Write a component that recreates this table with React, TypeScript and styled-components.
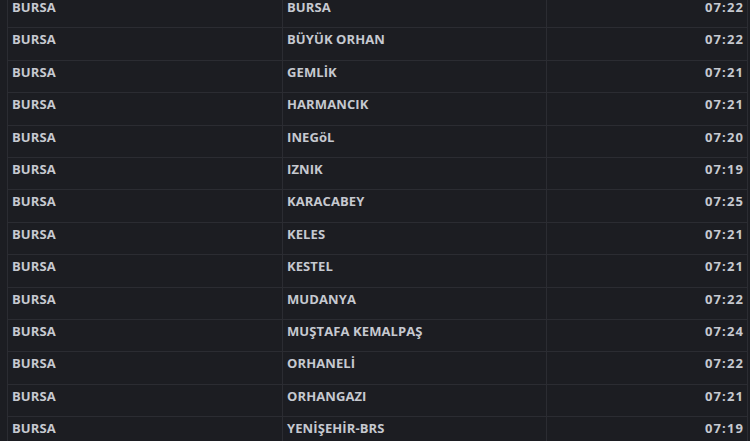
import React from 'react';
import styled, { createGlobalStyle } from 'styled-components';

const GlobalStyle = createGlobalStyle`
  html, body {
    margin: 0;
    padding: 0;
    background: #1c1d22;
    overflow: hidden;
  }
`;

const Page = styled.div`
  width: 750px;
  height: 441px;
  overflow: hidden;
  background: #1c1d22;
  padding-left: 7px;
  box-sizing: border-box;
`;

const Table = styled.div`
  width: 739px;
  margin-top: -4px;
  border-left: 1px solid #2b2c32;
  border-right: 1px solid #2b2c32;
`;

const Row = styled.div`
  display: grid;
  grid-template-columns: 275px 264px 1fr;
  height: 32.4px;
  box-sizing: border-box;
  border-bottom: 1px solid #2b2c32;
`;

const Cell = styled.div<{ $align?: 'left' | 'right'; $divider?: boolean }>`
  padding: 6px 4px 0 4px;
  font-family: 'Open Sans', 'Liberation Sans', sans-serif;
  font-weight: 700;
  font-size: 13px;
  line-height: 10px;
  letter-spacing: 0.1px;
  color: #c6c9d0;
  text-align: ${({ $align }) => $align || 'left'};
  border-right: ${({ $divider }) => ($divider ? '1px solid #2b2c32' : 'none')};
  white-space: nowrap;
`;

const Time = styled(Cell)`
  letter-spacing: 1.1px;
  padding-right: 3px;
`;

const rows: [string, string, string][] = [
  ['BURSA', 'BURSA', '07:22'],
  ['BURSA', 'BÜYÜK ORHAN', '07:22'],
  ['BURSA', 'GEMLİK', '07:21'],
  ['BURSA', 'HARMANCIK', '07:21'],
  ['BURSA', 'INEGöL', '07:20'],
  ['BURSA', 'IZNIK', '07:19'],
  ['BURSA', 'KARACABEY', '07:25'],
  ['BURSA', 'KELES', '07:21'],
  ['BURSA', 'KESTEL', '07:21'],
  ['BURSA', 'MUDANYA', '07:22'],
  ['BURSA', 'MUŞTAFA KEMALPAŞ', '07:24'],
  ['BURSA', 'ORHANELİ', '07:22'],
  ['BURSA', 'ORHANGAZI', '07:21'],
  ['BURSA', 'YENİŞEHİR-BRS', '07:19'],
];

export default function App() {
  return (
    <Page>
      <GlobalStyle />
      <Table>
        {rows.map(([city, district, time], i) => (
          <Row key={i}>
            <Cell $divider>{city}</Cell>
            <Cell $divider>{district}</Cell>
            <Time $align='right'>{time}</Time>
          </Row>
        ))}
      </Table>
    </Page>
  );
}
